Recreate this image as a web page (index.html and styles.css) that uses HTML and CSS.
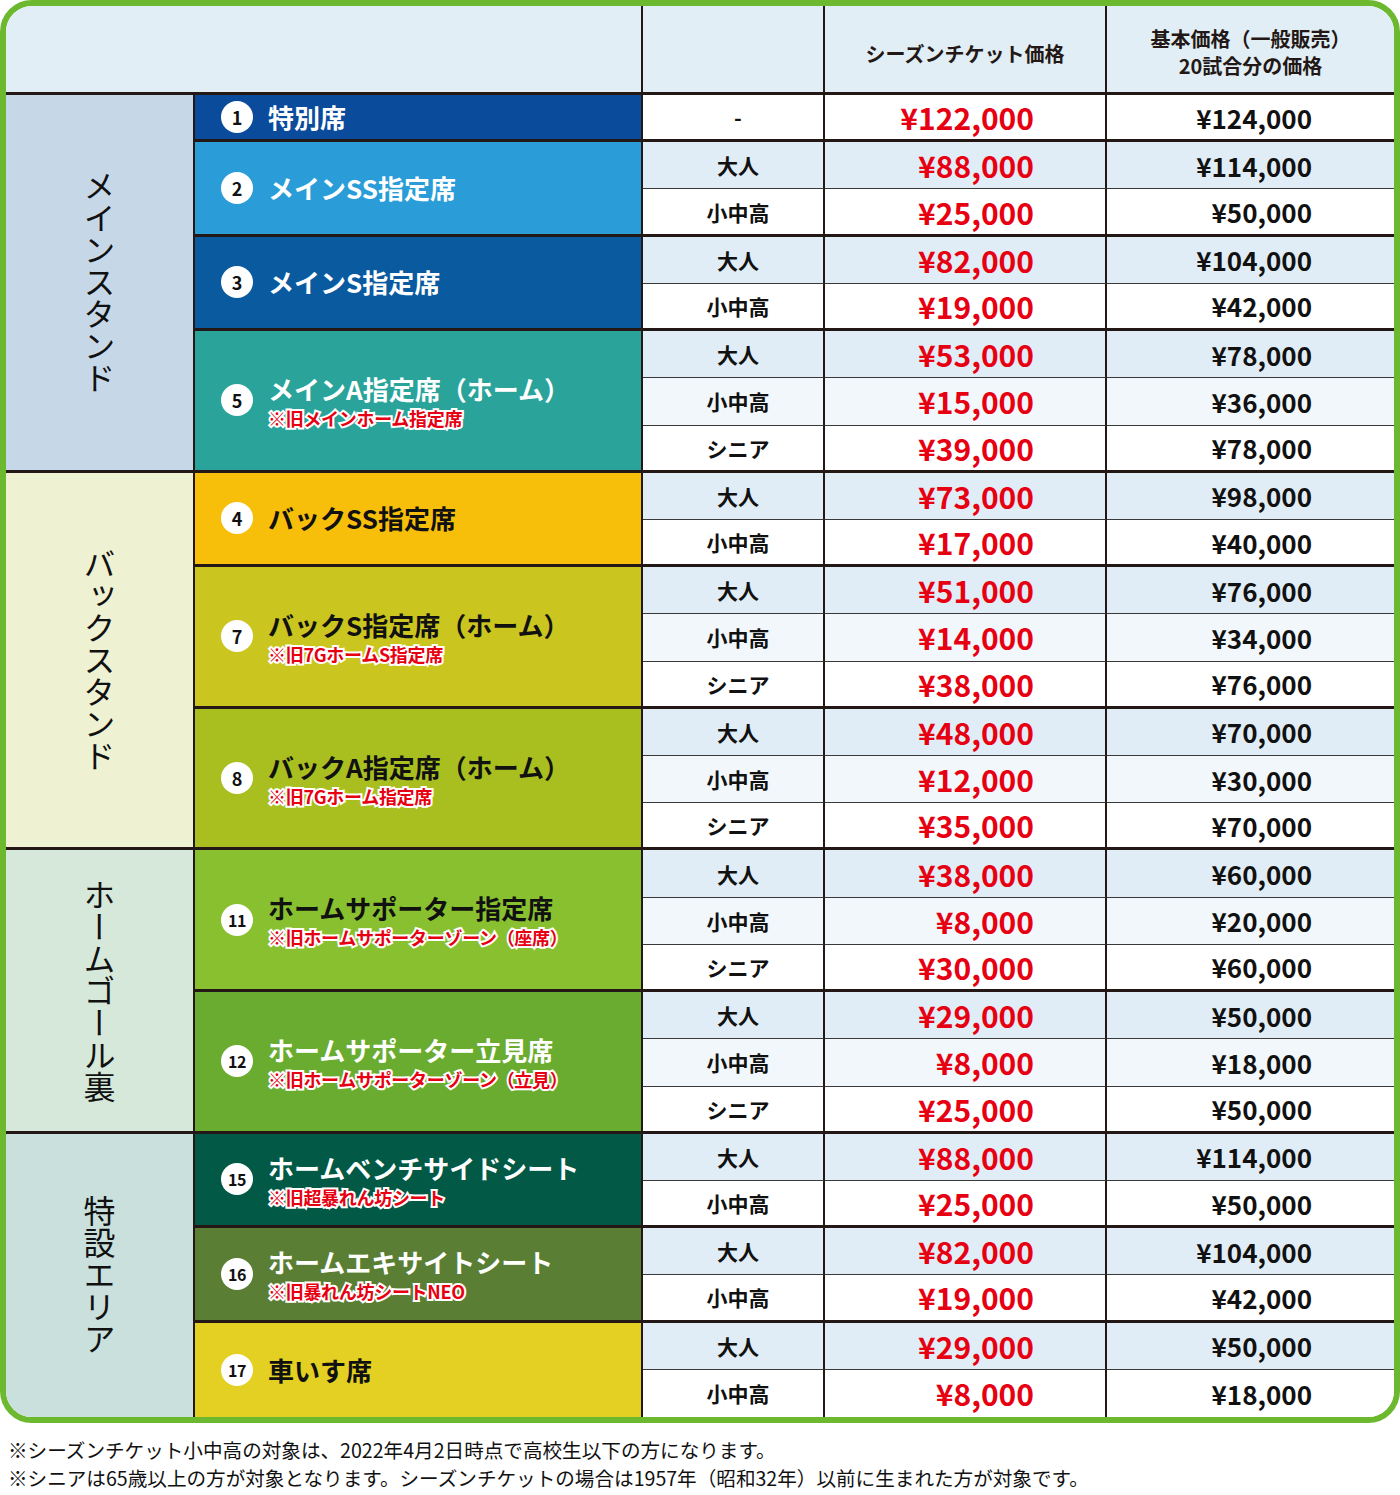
FILE: index.html
```html
<!DOCTYPE html>
<html lang="ja">
<head>
<meta charset="utf-8">
<title>シーズンチケット価格</title>
<link rel="stylesheet" href="styles.css">
</head>
<body>
<div class="table">
  <div class="hd hd-blank"></div>
  <div class="hd"></div>
  <div class="hd">シーズンチケット価格</div>
  <div class="hd hd-last">基本価格（一般販売）<br>20試合分の価格</div>

  <!-- メインスタンド -->
  <div class="group g-main span8 gend"><span>メインスタンド</span></div>
  <div class="seat s1 span1 send"><span class="num">1</span><div class="nm"><div class="name">特別席</div></div></div>
  <div class="type w e">-</div><div class="sp w e">¥122,000</div><div class="bp w e">¥124,000</div>

  <div class="seat s2 span2 send"><span class="num">2</span><div class="nm"><div class="name">メインSS指定席</div></div></div>
  <div class="type a">大人</div><div class="sp a">¥88,000</div><div class="bp a">¥114,000</div>
  <div class="type w e">小中高</div><div class="sp w e">¥25,000</div><div class="bp w e">¥50,000</div>

  <div class="seat s3 span2 send"><span class="num">3</span><div class="nm"><div class="name">メインS指定席</div></div></div>
  <div class="type a">大人</div><div class="sp a">¥82,000</div><div class="bp a">¥104,000</div>
  <div class="type w e">小中高</div><div class="sp w e">¥19,000</div><div class="bp w e">¥42,000</div>

  <div class="seat s5 span3 send"><span class="num">5</span><div class="nm"><div class="name">メインA指定席（ホーム）</div><div class="note">※旧メインホーム指定席</div></div></div>
  <div class="type a">大人</div><div class="sp a">¥53,000</div><div class="bp a">¥78,000</div>
  <div class="type b">小中高</div><div class="sp b">¥15,000</div><div class="bp b">¥36,000</div>
  <div class="type w e">シニア</div><div class="sp w e">¥39,000</div><div class="bp w e">¥78,000</div>

  <!-- バックスタンド -->
  <div class="group g-back span8 gend"><span>バックスタンド</span></div>
  <div class="seat s4 dark span2 send"><span class="num">4</span><div class="nm"><div class="name">バックSS指定席</div></div></div>
  <div class="type a">大人</div><div class="sp a">¥73,000</div><div class="bp a">¥98,000</div>
  <div class="type w e">小中高</div><div class="sp w e">¥17,000</div><div class="bp w e">¥40,000</div>

  <div class="seat s7 dark span3 send"><span class="num">7</span><div class="nm"><div class="name">バックS指定席（ホーム）</div><div class="note">※旧7GホームS指定席</div></div></div>
  <div class="type a">大人</div><div class="sp a">¥51,000</div><div class="bp a">¥76,000</div>
  <div class="type b">小中高</div><div class="sp b">¥14,000</div><div class="bp b">¥34,000</div>
  <div class="type w e">シニア</div><div class="sp w e">¥38,000</div><div class="bp w e">¥76,000</div>

  <div class="seat s8 dark span3 send"><span class="num">8</span><div class="nm"><div class="name">バックA指定席（ホーム）</div><div class="note">※旧7Gホーム指定席</div></div></div>
  <div class="type a">大人</div><div class="sp a">¥48,000</div><div class="bp a">¥70,000</div>
  <div class="type b">小中高</div><div class="sp b">¥12,000</div><div class="bp b">¥30,000</div>
  <div class="type w e">シニア</div><div class="sp w e">¥35,000</div><div class="bp w e">¥70,000</div>

  <!-- ホームゴール裏 -->
  <div class="group g-goal span6 gend"><span>ホームゴール裏</span></div>
  <div class="seat s11 dark span3 send"><span class="num two">11</span><div class="nm"><div class="name">ホームサポーター指定席</div><div class="note">※旧ホームサポーターゾーン（座席）</div></div></div>
  <div class="type a">大人</div><div class="sp a">¥38,000</div><div class="bp a">¥60,000</div>
  <div class="type b">小中高</div><div class="sp b">¥8,000</div><div class="bp b">¥20,000</div>
  <div class="type w e">シニア</div><div class="sp w e">¥30,000</div><div class="bp w e">¥60,000</div>

  <div class="seat s12 span3 send"><span class="num two">12</span><div class="nm"><div class="name">ホームサポーター立見席</div><div class="note">※旧ホームサポーターゾーン（立見）</div></div></div>
  <div class="type a">大人</div><div class="sp a">¥29,000</div><div class="bp a">¥50,000</div>
  <div class="type b">小中高</div><div class="sp b">¥8,000</div><div class="bp b">¥18,000</div>
  <div class="type w e">シニア</div><div class="sp w e">¥25,000</div><div class="bp w e">¥50,000</div>

  <!-- 特設エリア -->
  <div class="group g-spec span6"><span>特設エリア</span></div>
  <div class="seat s15 span2 send"><span class="num two">15</span><div class="nm"><div class="name">ホームベンチサイドシート</div><div class="note">※旧超暴れん坊シート</div></div></div>
  <div class="type a">大人</div><div class="sp a">¥88,000</div><div class="bp a">¥114,000</div>
  <div class="type w e">小中高</div><div class="sp w e">¥25,000</div><div class="bp w e">¥50,000</div>

  <div class="seat s16 span2 send"><span class="num two">16</span><div class="nm"><div class="name">ホームエキサイトシート</div><div class="note">※旧暴れん坊シートNEO</div></div></div>
  <div class="type a">大人</div><div class="sp a">¥82,000</div><div class="bp a">¥104,000</div>
  <div class="type w e">小中高</div><div class="sp w e">¥19,000</div><div class="bp w e">¥42,000</div>

  <div class="seat s17 dark span2"><span class="num two">17</span><div class="nm"><div class="name">車いす席</div></div></div>
  <div class="type a">大人</div><div class="sp a">¥29,000</div><div class="bp a">¥50,000</div>
  <div class="type w last">小中高</div><div class="sp w last">¥8,000</div><div class="bp w last">¥18,000</div>
</div>

<div class="notes">
  <p>※シーズンチケット小中高の対象は、2022年4月2日時点で高校生以下の方になります。</p>
  <p>※シニアは65歳以上の方が対象となります。シーズンチケットの場合は1957年（昭和32年）以前に生まれた方が対象です。</p>
</div>
</body>
</html>
```

FILE: styles.css
```css
* { box-sizing: border-box; }
html, body { margin: 0; padding: 0; background: #fff; }
body {
  font-family: "Noto Sans CJK JP", "Noto Sans", sans-serif;
  color: #231815;
  width: 1400px;
}

.table {
  width: 1400px;
  height: 1423px;
  border: 6px solid #6cb82f;
  border-radius: 32px;
  overflow: hidden;
  display: grid;
  grid-template-columns: 189px 448px 182px 282px 1fr;
  grid-template-rows: 89px repeat(28, 1fr);
}

.hd {
  background: #e2eef5;
  border-bottom: 3px solid #231815;
  border-right: 2px solid #231815;
  display: flex;
  align-items: center;
  justify-content: center;
  text-align: center;
  font-weight: 700;
  font-size: 20px;
  line-height: 27px;
  padding-top: 8px;
}
.hd-blank { grid-column: 1 / span 2; }
.hd-last { border-right: 0; padding-top: 6px; }

.span1 { grid-row: span 1; }
.span2 { grid-row: span 2; }
.span3 { grid-row: span 3; }
.span6 { grid-row: span 6; }
.span8 { grid-row: span 8; }

.group {
  grid-column: 1;
  border-right: 2px solid #231815;
  display: flex;
  align-items: center;
  justify-content: center;
}
.group span {
  writing-mode: vertical-rl;
  font-size: 32px;
  font-weight: 400;
  line-height: 1;
  color: #111;
}
.gend { border-bottom: 3px solid #231815; }
.g-main { background: #c6d8e8; }
.g-back { background: #eef2d3; }
.g-goal { background: #d6e8da; }
.g-spec { background: #c9e0dc; }

.seat {
  grid-column: 2;
  border-right: 2px solid #231815;
  display: flex;
  align-items: center;
  padding-left: 26px;
  gap: 15px;
  color: #fff;
}
.send { border-bottom: 3px solid #231815; }
.seat.dark { color: #111; }
.s1 { background: #0b4b9c; }
.s2 { background: #2a9cd8; }
.s3 { background: #0a5aa0; }
.s5 { background: #2aa39a; }
.s4 { background: #f8bf0a; }
.s7 { background: #cbc520; }
.s8 { background: #a9bf20; }
.s11 { background: #88c030; }
.s12 { background: #6aac30; }
.s15 { background: #015946; }
.s16 { background: #5a7f34; }
.s17 { background: #e3d022; }

.num {
  flex: none;
  width: 32px;
  height: 32px;
  border-radius: 50%;
  background: #fff;
  color: #111;
  display: flex;
  align-items: center;
  justify-content: center;
  font-weight: 700;
  font-size: 18px;
  line-height: 1;
}
.num.two { font-size: 16px; letter-spacing: -0.5px; }

.nm { display: flex; flex-direction: column; }
.name {
  font-weight: 700;
  font-size: 26px;
  line-height: 32px;
}
.note {
  margin-top: 3px;
  font-weight: 700;
  font-size: 18px;
  line-height: 20px;
  color: #e60012;
  letter-spacing: -0.3px;
  -webkit-text-stroke: 4px #fff;
  paint-order: stroke fill;
}

.type, .sp, .bp {
  display: flex;
  align-items: center;
  border-bottom: 1px solid #3a3a3a;
}
.type {
  grid-column: 3;
  border-right: 2px solid #231815;
  justify-content: center;
  padding-left: 10px;
  font-size: 21px;
  font-weight: 700;
  color: #111;
}
.sp {
  grid-column: 4;
  border-right: 2px solid #231815;
  justify-content: flex-end;
  padding-right: 71px;
  font-size: 30px;
  font-weight: 600;
  color: #e60012;
}
.bp {
  grid-column: 5;
  justify-content: flex-end;
  padding-right: 82px;
  font-size: 26px;
  font-weight: 600;
  color: #111;
}
.e { border-bottom: 3px solid #231815; }
.last { border-bottom: 0; }
.a { background: #e1edf6; }
.b { background: #f1f7fb; }
.w { background: #fff; }

.notes {
  padding: 13px 0 0 8px;
  font-size: 19.6px;
  line-height: 28px;
  color: #111;
}
.notes p { margin: 0; }
```
